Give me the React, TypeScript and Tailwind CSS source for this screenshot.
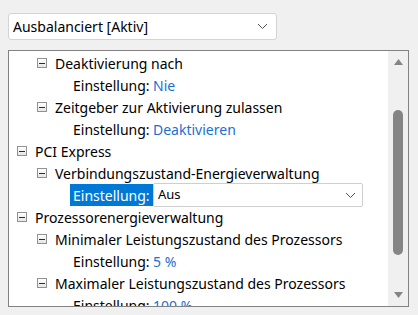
import React from "react";

// tree rows
type Row =
    | { kind: "node"; level: number; label: string }
    | { kind: "setting"; value: string; active?: boolean };

const rows: Row[] = [
    { kind: "node", level: 1, label: "Deaktivierung nach" },
    { kind: "setting", value: "Nie" },
    { kind: "node", level: 1, label: "Zeitgeber zur Aktivierung zulassen" },
    { kind: "setting", value: "Deaktivieren" },
    { kind: "node", level: 0, label: "PCI Express" },
    { kind: "node", level: 1, label: "Verbindungszustand-Energieverwaltung" },
    { kind: "setting", value: "Aus", active: true },
    { kind: "node", level: 0, label: "Prozessorenergieverwaltung" },
    { kind: "node", level: 1, label: "Minimaler Leistungszustand des Prozessors" },
    { kind: "setting", value: "5 %" },
    { kind: "node", level: 1, label: "Maximaler Leistungszustand des Prozessors" },
    { kind: "setting", value: "100 %" },
];

const Chevron = () => (
    <svg width="11" height="7" viewBox="0 0 11 7" fill="none">
        <path d="M1 1l4.5 4.5L10 1" stroke="#555" strokeWidth="1" />
    </svg>
);

const MinusBox = () => (
    <span className="flex h-[10px] w-[10px] shrink-0 items-center justify-center border border-[#919191] bg-gradient-to-b from-white to-[#e6e6e6]">
        <span className="h-px w-[6px] bg-[#2b2b2b]" />
    </span>
);

const TreeRow: React.FC<{ row: Row }> = ({ row }) => {
    if (row.kind === "node") {
        return (
            <div
                className={`flex h-[22px] items-center gap-2 ${row.level === 0 ? "pl-2" : "pl-7"}`}
            >
                <MinusBox />
                <span className="whitespace-nowrap">{row.label}</span>
            </div>
        );
    }

    return (
        <div className="flex h-[22px] items-center pl-[61px]">
            <span
                className={`flex h-[22px] w-[83px] shrink-0 items-center pl-[3px] ${
                    row.active ? "bg-[#0078d7] text-white" : ""
                }`}
            >
                Einstellung:
            </span>
            {row.active ? (
                <div className="flex h-[24px] w-[210px] items-center justify-between rounded-[2px] border border-[#cfcfcf] bg-white pl-[4px] pr-[6px] text-[13px]">
                    <span>Aus</span>
                    <Chevron />
                </div>
            ) : (
                <span className="whitespace-nowrap text-[#1b6fd0]">{row.value}</span>
            )}
        </div>
    );
};

const App: React.FC = () => {
    return (
        <div
            className="h-[315px] w-[418px] overflow-hidden bg-[#f0f0f0] pt-[13px] pl-2 text-[14px] text-black"
            style={{ fontFamily: '"Noto Sans", "Open Sans", sans-serif' }}
        >
            {/* plan select */}
            <div className="flex h-[27px] w-[269px] items-center justify-between rounded-[3px] border border-[#d4d4d4] bg-white pl-[4px] pr-[8px]">
                <span>Ausbalanciert [Aktiv]</span>
                <Chevron />
            </div>

            {/* settings tree */}
            <div className="mt-[10px] flex h-[257px] w-[401px] border border-[#828282] bg-white">
                <div className="flex-1 overflow-hidden pt-px">
                    {rows.map((row, i) => (
                        <TreeRow key={i} row={row} />
                    ))}
                </div>
                {/* scrollbar */}
                <div className="flex w-[20px] flex-col items-center bg-[#f0f0f0] py-[8px]">
                    <svg width="9" height="6" viewBox="0 0 9 6">
                        <path d="M0 6L4.5 0L9 6z" fill="#858585" />
                    </svg>
                    <div className="mt-[45px] h-[145px] w-[10px] rounded-[5px] bg-[#858585]" />
                    <div className="flex-1" />
                    <svg width="9" height="6" viewBox="0 0 9 6">
                        <path d="M0 0L4.5 6L9 0z" fill="#858585" />
                    </svg>
                </div>
            </div>
        </div>
    );
};

export default App;
